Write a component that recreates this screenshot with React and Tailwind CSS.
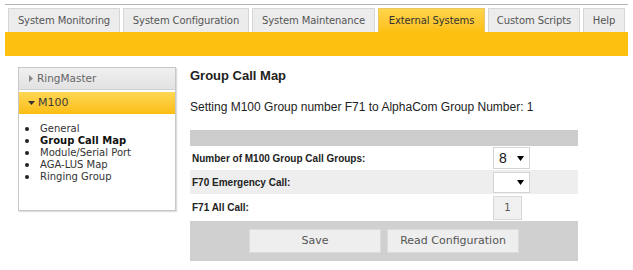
import React from "react";

const tabs = [
  { label: "System Monitoring", w: "w-[112px]" },
  { label: "System Configuration", w: "w-[126px]" },
  { label: "System Maintenance", w: "w-[123px]" },
  { label: "External Systems", w: "w-[107px]", active: true },
  { label: "Custom Scripts", w: "w-[92px]" },
  { label: "Help", w: "w-[42px]" },
];

const menu = ["General", "Group Call Map", "Module/Serial Port", "AGA-LUS Map", "Ringing Group"];

const Caret = () => (
  <svg width="7" height="5" viewBox="0 0 7 5" className="ml-auto">
    <path d="M0 0h7L3.5 5z" fill="#000" />
  </svg>
);

export default function App() {
  const verdana = { fontFamily: '"DejaVu Sans", Verdana, sans-serif' };
  return (
    <div className="w-[633px] h-[270px] bg-white overflow-hidden font-['Liberation_Sans',Arial,sans-serif]">
      <div className="ml-[5px] mt-[4px] w-[623px] border-t border-[#b5b5b5]">
        <div className="flex gap-[3px] pl-[3px] pt-[3px] text-[10px] tracking-[-0.1px]" style={verdana}>
          {tabs.map((t) => (
            <div
              key={t.label}
              className={`${t.w} h-[24px] flex items-center justify-center border border-b-0 ${
                t.active
                  ? "bg-gradient-to-b from-[#fed44a] to-[#fdc010] border-[#e8c565] text-[#333]"
                  : "bg-[#ececec] border-[#d6d6d6] text-[#555]"
              }`}
            >
              {t.label}
            </div>
          ))}
        </div>
        <div className="h-[24px] bg-[#fdc010]" />
      </div>

      <div className="flex mt-[11px]">
        <div className="ml-[18px] w-[158px] h-[144px] border border-[#c8c8c8] shadow-[1px_1px_1px_#ddd]" style={verdana}>
          <div className="h-[22px] bg-gradient-to-b from-[#f0f0f0] to-[#e2e2e2] border-b border-[#d0d0d0] flex items-center pl-[10px] text-[10.5px] text-[#666]">
            <svg width="4" height="7" viewBox="0 0 4 7" className="mr-[4px]">
              <path d="M0 0l4 3.5L0 7z" fill="#888" />
            </svg>
            RingMaster
          </div>
          <div className="mt-[2px] h-[22px] bg-gradient-to-b from-[#fed750] to-[#fbbd0a] flex items-center pl-[9px] text-[11px] text-[#3a3a3a]">
            <svg width="7" height="4" viewBox="0 0 7 4" className="mr-[3px]">
              <path d="M0 0h7L3.5 4z" fill="#333" />
            </svg>
            M100
          </div>
          <ul className="mt-[9px] pl-[6px] text-[10px] leading-[12px] text-[#333]">
            {menu.map((m) => (
              <li key={m} className={`flex items-center ${m === "Group Call Map" ? "font-bold text-[#111]" : ""}`}>
                <span className="w-[4px] h-[4px] rounded-full bg-[#222] mr-[11px]" />
                {m}
              </li>
            ))}
          </ul>
        </div>

        <div className="ml-[14px] w-[388px]">
          <div className="text-[13px] font-bold text-[#222] leading-[16px] mt-[1px]">Group Call Map</div>
          <div className="mt-[16px] text-[12px] text-[#222] leading-[14px]">
            Setting M100 Group number F71 to AlphaCom Group Number: 1
          </div>
          <div className="mt-[16px] h-[16px] bg-[#cccccc]" />
          <div className="h-[24px] flex items-center pl-[2px] text-[10px] font-bold text-[#222]">
            <span>Number of M100 Group Call Groups:</span>
            <div className="ml-auto mr-[48px] w-[37px] h-[22px] border border-[#d4d4d4] bg-white flex items-center px-[5px] text-[14px] font-normal text-[#111]">
              8
              <Caret />
            </div>
          </div>
          <div className="h-[24px] bg-[#eeeeee] flex items-center pl-[2px] text-[10px] font-bold text-[#222]">
            <span>F70 Emergency Call:</span>
            <div className="ml-auto mr-[48px] w-[37px] h-[21px] border border-[#d4d4d4] bg-white flex items-center px-[5px]">
              <Caret />
            </div>
          </div>
          <div className="h-[27px] flex items-center pl-[2px] text-[10px] font-bold text-[#222]">
            <span>F71 All Call:</span>
            <div
              className="ml-auto mr-[56px] w-[29px] h-[24px] border border-[#d8d8d8] bg-[#f0f0f0] flex items-center justify-center text-[10px] font-normal text-[#555]"
              style={verdana}
            >
              1
            </div>
          </div>
          <div className="h-[40px] bg-[#d0d0d0] flex items-center pl-[59px] gap-[6px] text-[11px] text-[#555]" style={verdana}>
            <div className="w-[132px] h-[24px] bg-[#eeeeee] border border-[#dcdcdc] flex items-center justify-center">Save</div>
            <div className="w-[132px] h-[24px] bg-[#eeeeee] border border-[#dcdcdc] flex items-center justify-center">Read Configuration</div>
          </div>
        </div>
      </div>
    </div>
  );
}
